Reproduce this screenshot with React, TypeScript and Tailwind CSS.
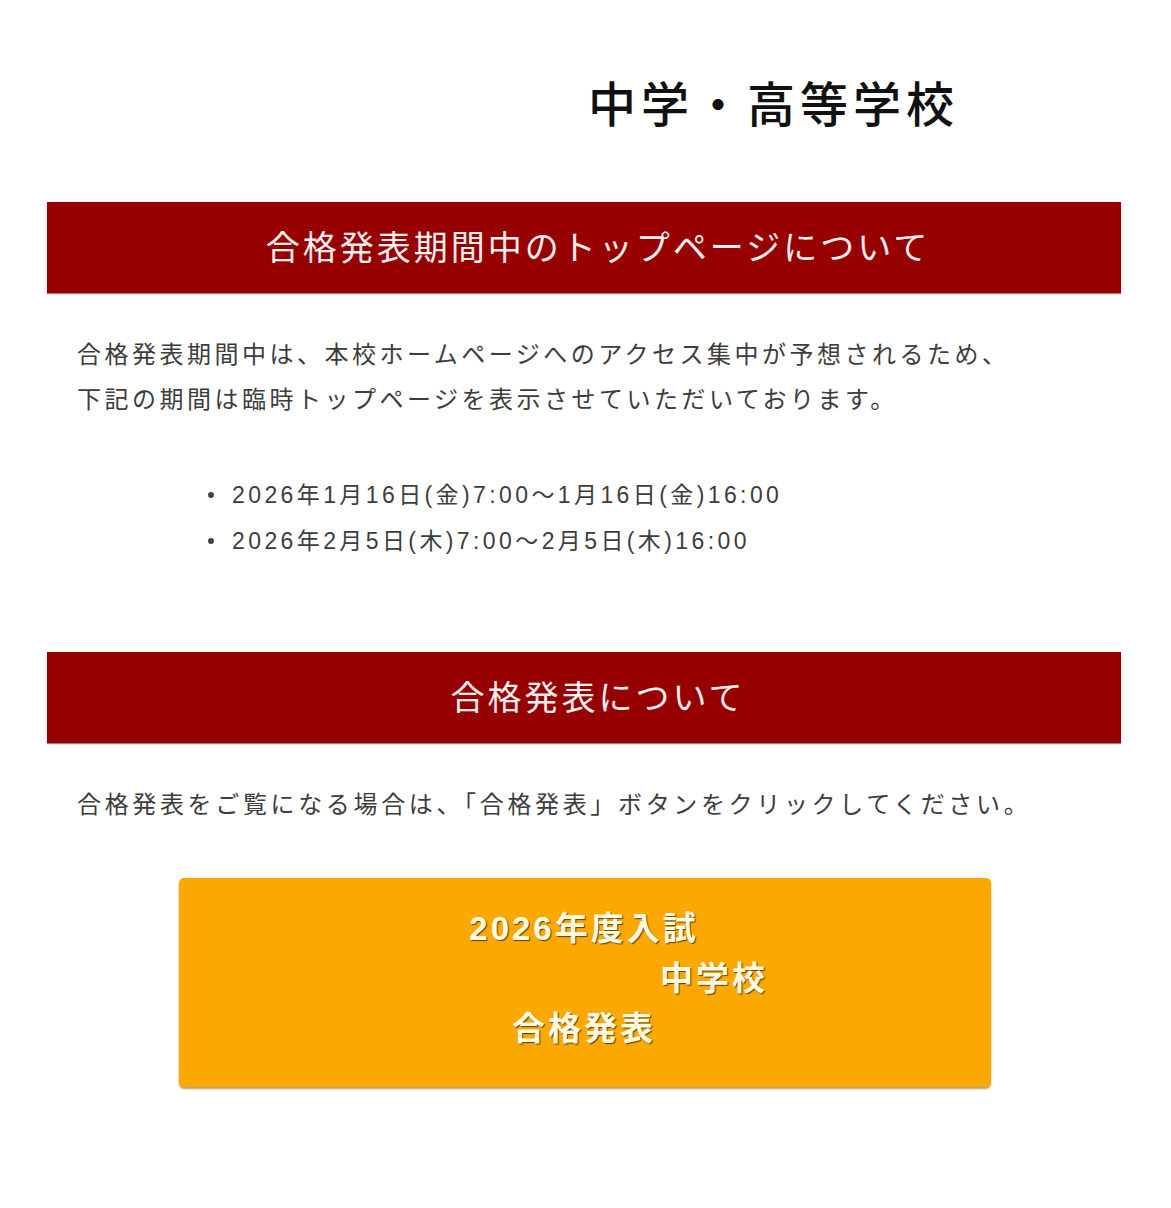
const JP = "font-['Liberation_Sans','Noto_Sans_CJK_JP',sans-serif]";

const PERIODS = [
  '2026年1月16日(金)7:00～1月16日(金)16:00',
  '2026年2月5日(木)7:00～2月5日(木)16:00',
];

function SectionBar({ title }: { title: string }) {
  return (
    <div className="mx-[47px] flex h-[91px] w-[1074px] items-center justify-center bg-[#970000] shadow-[0_1px_1px_rgba(60,0,0,0.5)]">
      <h2 className={`${JP} pl-[28px] text-[34px] font-normal leading-none tracking-[3px] text-[#fbeeee]`}>
        {title}
      </h2>
    </div>
  );
}

export default function App() {
  return (
    <div className={`${JP} min-h-[1208px] w-[1171px] bg-white text-[#3d3d3d]`}>
      {/* School name */}
      <header className="flex h-[202px] items-start pl-[588px] pt-[70px]">
        <h1 className="text-[48px] font-medium leading-[72px] tracking-[5px] text-[#111]">
          中学・高等学校
        </h1>
      </header>

      <SectionBar title="合格発表期間中のトップページについて" />

      <div className="px-[77px] pt-[39px] text-[24px] leading-[45px] tracking-[3.5px]">
        <p>合格発表期間中は、本校ホームページへのアクセス集中が予想されるため、</p>
        <p>下記の期間は臨時トップページを表示させていただいております。</p>
      </div>

      <ul className="pl-[208px] pt-[50px] text-[23px] leading-[46px] tracking-[3.4px]">
        {PERIODS.map((p) => (
          <li key={p} className="flex items-center">
            <span className="mr-[18px] h-[6px] w-[6px] rounded-full bg-[#444]" />
            <span>{p}</span>
          </li>
        ))}
      </ul>

      <div className="h-[88px]" />

      <SectionBar title="合格発表について" />

      <div className="px-[77px] pt-[39px] text-[24px] leading-[45px] tracking-[3.65px]">
        <p>合格発表をご覧になる場合は、「合格発表」ボタンをクリックしてください。</p>
      </div>

      {/* Results button */}
      <div className="pt-[51px]">
        <a
          href="#"
          className="mx-[179px] flex h-[209px] w-[812px] flex-col items-stretch rounded-[5px] bg-[#fba900] pt-[26px] text-[33px] font-bold leading-[50px] tracking-[3px] text-[#fffbe3] shadow-[0_2px_2px_rgba(150,90,0,0.6)] [text-shadow:1px_1px_1px_rgba(80,50,0,0.9)]"
        >
          <span className="pr-[2px] text-center">2026年度入試</span>
          <span className="pl-[258px] text-center">中学校</span>
          <span className="pr-[2px] text-center">合格発表</span>
        </a>
      </div>
    </div>
  );
}
